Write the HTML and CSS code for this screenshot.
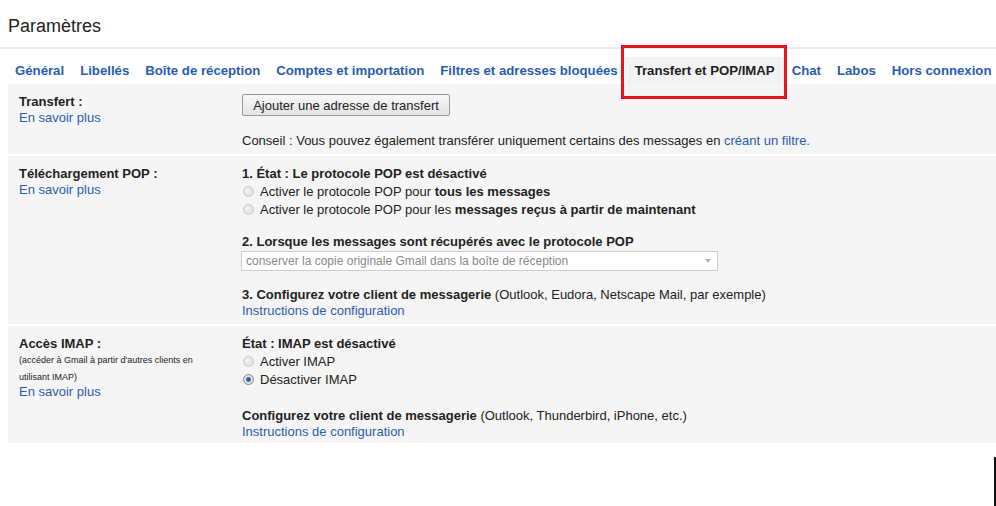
FILE: index.html
```html
<!DOCTYPE html>
<html lang="fr">
<head>
    <meta charset="UTF-8">
    <meta name="viewport" content="width=device-width, initial-scale=1.0">
    <title>Paramètres</title>
    <link rel="stylesheet" href="styles.css">
</head>
<body>

<div class="page-title">Paramètres</div>

<div class="tabs">
    <a class="tab" href="#">Général</a>
    <a class="tab" href="#">Libellés</a>
    <a class="tab" href="#">Boîte de réception</a>
    <a class="tab" href="#">Comptes et importation</a>
    <a class="tab" href="#">Filtres et adresses bloquées</a>
    <span class="tab selected">Transfert et POP/IMAP</span>
    <a class="tab" href="#">Chat</a>
    <a class="tab" href="#">Labos</a>
    <a class="tab" href="#">Hors connexion</a>
</div>

<div class="panel">
    <!-- Transfert -->
    <div class="section first">
        <div class="label">
            <b>Transfert :</b>
            <a href="#">En savoir plus</a>
        </div>
        <div class="content">
            <button class="btn">Ajouter une adresse de transfert</button>
            <p class="tip">Conseil : Vous pouvez également transférer uniquement certains des messages en <a href="#">créant un filtre.</a></p>
        </div>
    </div>

    <!-- POP -->
    <div class="section">
        <div class="label">
            <b>Téléchargement POP :</b>
            <a href="#">En savoir plus</a>
        </div>
        <div class="content">
            <b class="heading">1. État : Le protocole POP est désactivé</b>
            <label class="radio"><span class="dot"></span>Activer le protocole POP pour <b>tous les messages</b></label>
            <label class="radio"><span class="dot"></span>Activer le protocole POP pour les <b>messages reçus à partir de maintenant</b></label>

            <b class="step">2. Lorsque les messages sont récupérés avec le protocole POP</b>
            <div class="select">
                <span>conserver la copie originale Gmail dans la boîte de réception</span>
                <span class="arrow"></span>
            </div>

            <div class="step"><b>3. Configurez votre client de messagerie</b> (Outlook, Eudora, Netscape Mail, par exemple)</div>
            <a href="#">Instructions de configuration</a>
        </div>
    </div>

    <!-- IMAP -->
    <div class="section last">
        <div class="label">
            <b>Accès IMAP :</b>
            <span class="small">(accéder à Gmail à partir d'autres clients en utilisant IMAP)</span>
            <a href="#">En savoir plus</a>
        </div>
        <div class="content">
            <b class="heading">État : IMAP est désactivé</b>
            <label class="radio"><span class="dot"></span>Activer IMAP</label>
            <label class="radio"><span class="dot checked"></span>Désactiver IMAP</label>

            <div class="step wide"><b>Configurez votre client de messagerie</b> (Outlook, Thunderbird, iPhone, etc.)</div>
            <a href="#">Instructions de configuration</a>
        </div>
    </div>
</div>

<!-- highlight drawn over the tabs -->
<div class="highlight"></div>
<div class="edge-mark"></div>

</body>
</html>
```

FILE: styles.css
```css
body {
    margin: 0;
    font-family: "Liberation Sans", Arial, sans-serif;
    font-size: 13px;
    color: #222;
    background: #fff;
    position: relative;
    height: 506px;
    overflow: hidden;
}

a {
    color: #2a5db0;
    text-decoration: none;
}

.page-title {
    font-size: 18px;
    height: 47px;
    line-height: 52px;
    padding-left: 8px;
    border-bottom: 2px solid #ececec;
}

.tabs {
    display: flex;
    align-items: flex-end;
    height: 35px;
    padding-left: 7px;
}

.tab {
    font-weight: bold;
    font-size: 13.2px;
    padding: 0 8px;
    height: 27px;
    line-height: 27px;
    white-space: nowrap;
}

.selected {
    color: #222;
    background: #f3f3f3;
    padding: 0 10px;
    margin: 0 -1px;
}

.panel {
    margin-left: 8px;
    background: #f5f5f5;
}

.section {
    display: grid;
    grid-template-columns: 223px 1fr;
    padding: 10px 0 5px 11px;
    border-top: 2px solid #fff;
    line-height: 16px;
}

.section.first {
    border-top: none;
}

.section.last {
    padding-bottom: 3px;
}

.label,
.content {
    display: flex;
    flex-direction: column;
    align-items: flex-start;
}

.small {
    font-size: 9px;
    line-height: 17px;
    width: 190px;
    margin-bottom: -2px;
}

.btn {
    font-family: inherit;
    font-size: 13px;
    color: #222;
    height: 22px;
    width: 208px;
    padding: 0 8px;
    border: 1px solid #999;
    border-radius: 2px;
    background: linear-gradient(#f8f8f8, #e2e2e2);
}

.tip {
    margin: 17px 0 0;
}

.heading {
    margin-bottom: 1px;
}

.radio {
    display: block;
    height: 18px;
    line-height: 18px;
    white-space: nowrap;
}

.dot {
    display: inline-block;
    vertical-align: -1px;
    width: 11px;
    height: 11px;
    margin: 0 6px 0 1px;
    border-radius: 50%;
    border: 1px solid #c8c8c8;
    background: radial-gradient(circle at 40% 40%, #f4f4f4, #d6d6d6);
    box-sizing: border-box;
}

.dot.checked {
    border-color: #8a8a8a;
    background: radial-gradient(circle at 50% 50%, #2f4f86 0, #3f6fb5 2px, #dfe6ef 3px, #c9ced6 100%);
}

.step {
    margin-top: 15px;
}

.step.wide {
    margin-top: 19px;
}

.select {
    display: flex;
    justify-content: space-between;
    align-items: center;
    box-sizing: border-box;
    width: 477px;
    height: 20px;
    margin: 1px 0 0 -1px;
    padding: 0 6px 0 4px;
    border: 1px solid #cfcfcf;
    background: #fff;
    color: #8a8a8a;
    font-size: 12px;
}

.select + .step {
    margin-top: 16px;
}

.arrow {
    width: 0;
    height: 0;
    border-left: 3px solid transparent;
    border-right: 3px solid transparent;
    border-top: 4px solid #b5b5b5;
}

.highlight {
    position: absolute;
    left: 621px;
    top: 45px;
    width: 160px;
    height: 48px;
    border: 3px solid #e5141d;
}

.edge-mark {
    position: absolute;
    left: 994px;
    top: 457px;
    width: 2px;
    height: 49px;
    background: #111;
}
```
